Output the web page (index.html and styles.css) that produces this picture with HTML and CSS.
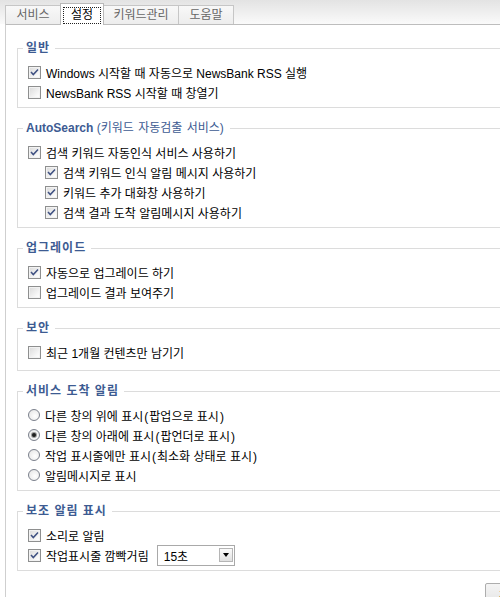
FILE: index.html
```html
<!DOCTYPE html>
<html lang="ko">
<head>
<meta charset="utf-8">
<title>설정</title>
<link rel="stylesheet" href="styles.css">
</head>
<body>
<div class="tabbar">
  <div class="tab t1">서비스</div>
  <div class="tab t2 active"><span class="focus">설정</span></div>
  <div class="tab t3">키워드관리</div>
  <div class="tab t4">도움말</div>
</div>
<div class="panel">
  <fieldset class="group">
    <legend>일반</legend>
    <div class="row"><span class="cb"><svg viewBox="0 0 11 11"><path d="M2 5 L4.3 7.6 L9 2.4"/></svg></span><span>Windows 시작할 때 자동으로 NewsBank RSS 실행</span></div>
    <div class="row"><span class="cb"></span><span>NewsBank RSS 시작할 때 창열기</span></div>
  </fieldset>
  <fieldset class="group">
    <legend class="latin">AutoSearch <span class="light">(키워드 자동검출 서비스)</span></legend>
    <div class="row"><span class="cb"><svg viewBox="0 0 11 11"><path d="M2 5 L4.3 7.6 L9 2.4"/></svg></span><span>검색 키워드 자동인식 서비스 사용하기</span></div>
    <div class="row sub"><span class="cb"><svg viewBox="0 0 11 11"><path d="M2 5 L4.3 7.6 L9 2.4"/></svg></span><span>검색 키워드 인식 알림 메시지 사용하기</span></div>
    <div class="row sub"><span class="cb"><svg viewBox="0 0 11 11"><path d="M2 5 L4.3 7.6 L9 2.4"/></svg></span><span>키워드 추가 대화창 사용하기</span></div>
    <div class="row sub"><span class="cb"><svg viewBox="0 0 11 11"><path d="M2 5 L4.3 7.6 L9 2.4"/></svg></span><span>검색 결과 도착 알림메시지 사용하기</span></div>
  </fieldset>
  <fieldset class="group">
    <legend>업그레이드</legend>
    <div class="row"><span class="cb"><svg viewBox="0 0 11 11"><path d="M2 5 L4.3 7.6 L9 2.4"/></svg></span><span>자동으로 업그레이드 하기</span></div>
    <div class="row"><span class="cb"></span><span>업그레이드 결과 보여주기</span></div>
  </fieldset>
  <fieldset class="group security">
    <legend>보안</legend>
    <div class="row"><span class="cb"></span><span>최근 1개월 컨텐츠만 남기기</span></div>
  </fieldset>
  <fieldset class="group">
    <legend>서비스 도착 알림</legend>
    <div class="row"><span class="rb"></span><span>다른 창의 위에 표시<span class="p">(</span>팝업으로 표시<span class="p">)</span></span></div>
    <div class="row"><span class="rb"><span class="dot"></span></span><span>다른 창의 아래에 표시<span class="p">(</span>팝언더로 표시<span class="p">)</span></span></div>
    <div class="row"><span class="rb"></span><span>작업 표시줄에만 표시<span class="p">(</span>최소화 상태로 표시<span class="p">)</span></span></div>
    <div class="row"><span class="rb"></span><span>알림메시지로 표시</span></div>
  </fieldset>
  <fieldset class="group">
    <legend>보조 알림 표시</legend>
    <div class="row"><span class="cb"><svg viewBox="0 0 11 11"><path d="M2 5 L4.3 7.6 L9 2.4"/></svg></span><span>소리로 알림</span></div>
    <div class="row"><span class="cb"><svg viewBox="0 0 11 11"><path d="M2 5 L4.3 7.6 L9 2.4"/></svg></span><span>작업표시줄 깜빡거림</span><span class="select"><span>15초</span><span class="arrow"></span></span></div>
  </fieldset>
  <div class="footer"><span class="btn">적용</span></div>
</div>
</body>
</html>
```

FILE: styles.css
```css
html, body {
  margin: 0;
  overflow: hidden;
  background: #fff;
}
body {
  width: 500px;
  height: 597px;
  font-family: "Liberation Sans", "Noto Sans CJK KR", sans-serif;
  font-size: 12px;
  color: #000;
}
.tabbar {
  height: 24px;
  display: flex;
  align-items: flex-end;
  padding-left: 5px;
  background: linear-gradient(#e3e3e3, #fafafa);
}
.tab {
  box-sizing: border-box;
  height: 19px;
  border: 1px solid #c6c6c6;
  border-bottom: none;
  background: linear-gradient(#f8f8f8, #ededed);
  color: #666;
  display: flex;
  align-items: center;
  justify-content: center;
  margin-left: -1px;
  line-height: 16px;
}
.tab.t1 { margin-left: 0; width: 56px; }
.t2 { width: 44px; }
.t3 { width: 76px; }
.t4 { width: 56px; }
.tab.active {
  height: 22px;
  margin-bottom: -1px;
  background: #fff;
  color: #000;
  position: relative;
  z-index: 1;
  border-color: #b9b9b9;
}
.focus {
  box-sizing: border-box;
  width: 38px;
  height: 17px;
  border: 1px dotted #222;
  display: flex;
  align-items: center;
  justify-content: center;
  margin-top: 1px;
}
.panel {
  border-top: 1px solid #bdbdbd;
  border-left: 1px solid #cfcfcf;
  margin-left: 5px;
  margin-right: -60px;
  padding: 15px 0 0 11px;
  height: 600px;
}
.group {
  margin: 0 0 12px;
  padding: 6px 0 5px 10px;
  border: 1px solid #dcdcdc;
  min-width: 0;
}
.group.security {
  padding-bottom: 8px;
}
legend {
  padding: 0 5px 0 3px;
  margin-left: -5px;
  font-weight: bold;
  color: #3d5b92;
  line-height: 16px;
  letter-spacing: 1px;
}
legend.latin {
  letter-spacing: 0;
  padding-right: 6px;
}
legend .light {
  font-weight: normal;
  word-spacing: 1px;
}
.row {
  display: flex;
  align-items: center;
  height: 20px;
  gap: 5px;
  white-space: pre;
}
.row .p {
  padding: 0 1px;
}
.row.sub {
  padding-left: 17px;
}
.cb {
  flex: none;
  box-sizing: border-box;
  width: 13px;
  height: 13px;
  border: 1px solid #8e8f8f;
  background: linear-gradient(135deg, #d9d9d9, #f8f8f8 75%, #ffffff);
  box-shadow: inset 0 0 0 1px #f2f2f2;
  display: flex;
}
.cb svg {
  width: 11px;
  height: 11px;
}
.cb path {
  fill: none;
  stroke: #3f5182;
  stroke-width: 1.5;
}
.rb {
  flex: none;
  box-sizing: border-box;
  width: 12px;
  height: 12px;
  border-radius: 50%;
  border: 1px solid #7b808c;
  background: radial-gradient(circle at 60% 60%, #ffffff, #e2e2e2);
  display: flex;
  align-items: center;
  justify-content: center;
}
.dot {
  width: 4px;
  height: 4px;
  border-radius: 50%;
  background: #1f1f1f;
  box-shadow: 0 0 0 1px #9a9a9a;
}
.select {
  box-sizing: border-box;
  width: 78px;
  height: 21px;
  margin: -1px 0 -1px 3px;
  border: 1px solid #a9a9a9;
  background: #fff;
  display: flex;
  align-items: center;
  justify-content: space-between;
  padding: 0 1px 0 6px;
}
.arrow {
  box-sizing: border-box;
  width: 14px;
  height: 14px;
  border: 1px solid #b5b5b5;
  background: linear-gradient(#fbfbfb, #e0e0e0);
  display: flex;
  align-items: center;
  justify-content: center;
}
.arrow::after {
  content: "";
  border-left: 3.5px solid transparent;
  border-right: 3.5px solid transparent;
  border-top: 4px solid #000;
}
.footer {
  padding-left: 468px;
}
.btn {
  box-sizing: border-box;
  display: flex;
  justify-content: center;
  width: 50px;
  height: 23px;
  padding-top: 3px;
  border: 1px solid #adadad;
  border-radius: 2px;
  background: linear-gradient(#f4f4f4, #e4e4e4);
}
```
